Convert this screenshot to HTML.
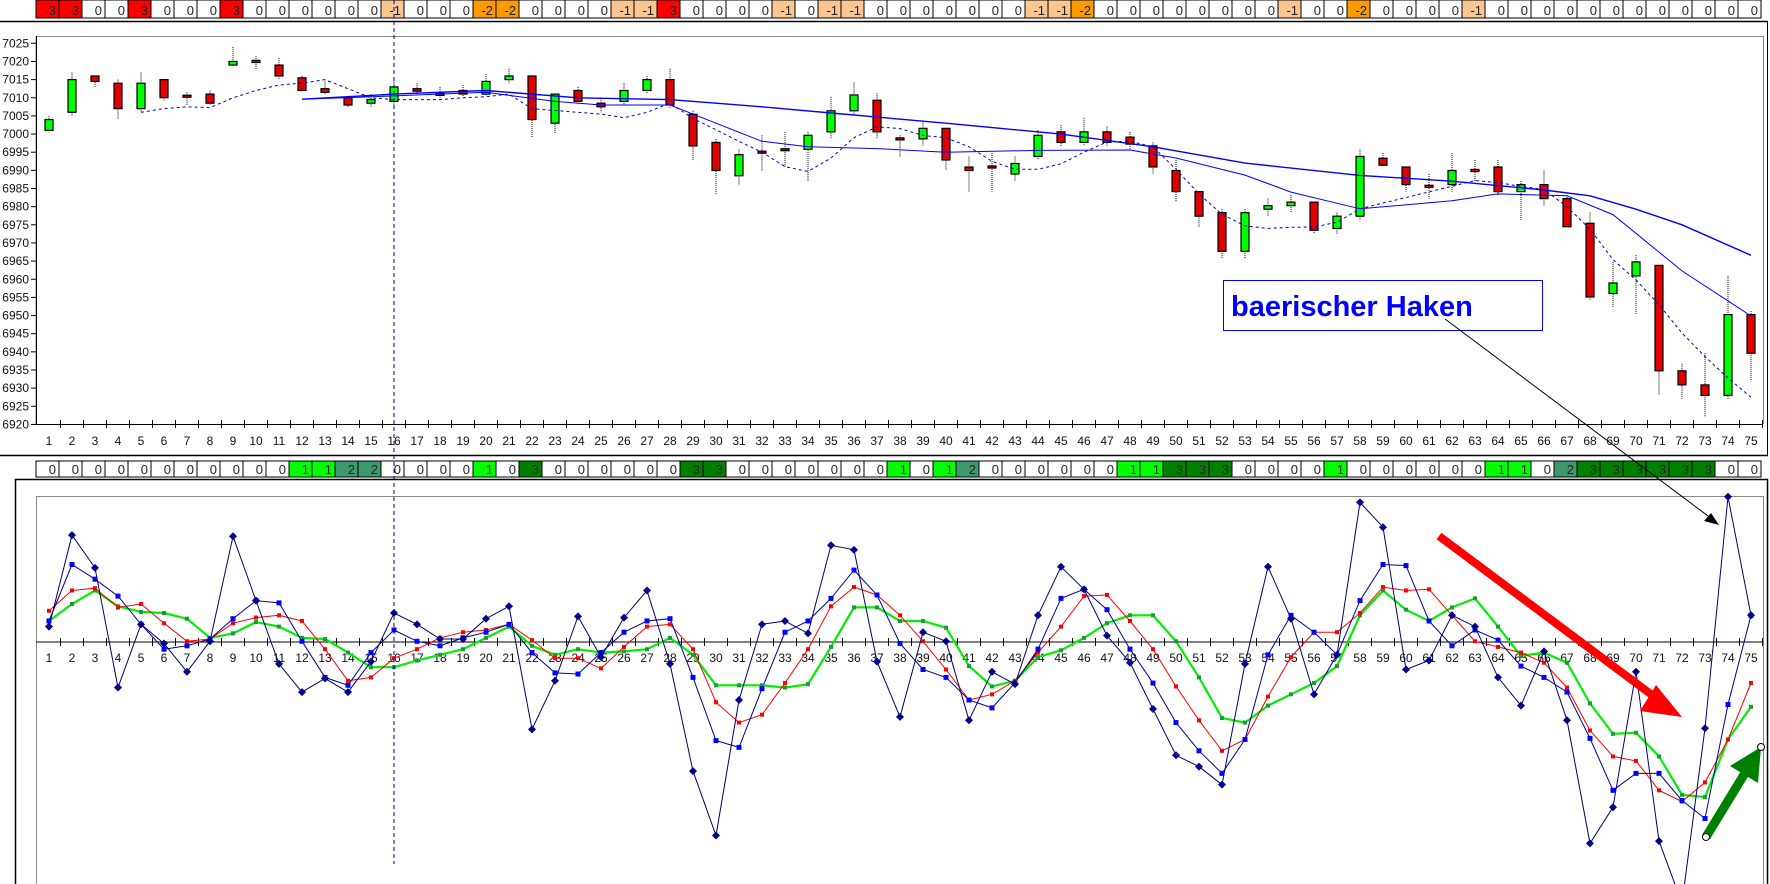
<!DOCTYPE html>
<html><head><meta charset="utf-8">
<style>
html,body{margin:0;padding:0;background:#fff;width:1770px;height:884px;overflow:hidden}
svg{display:block;font-family:"Liberation Sans",Arial,sans-serif}
</style></head>
<body>
<svg id="s" width="1770" height="884" viewBox="0 0 1770 884" xmlns="http://www.w3.org/2000/svg"></svg>
<script>
(function(){
var S=document.getElementById('s');var out=[];
function X(i){return 49+(i-1)*23;}
function YU(v){return 43.3+(7025-v)*3.63;}
var topv=[-3,-3,0,0,-3,0,0,0,-3,0,0,0,0,0,0,-1,0,0,0,-2,-2,0,0,0,0,-1,-1,-3,0,0,0,0,-1,0,-1,-1,0,0,0,0,0,0,0,-1,-1,-2,0,0,0,0,0,0,0,0,-1,0,0,-2,0,0,0,0,-1,0,0,0,0,0,0,0,0,0,0,0,0];
var bot=[0,0,0,0,0,0,0,0,0,0,0,1,1,2,2,0,0,0,0,1,0,3,0,0,0,0,0,0,3,3,0,0,0,0,0,0,0,1,0,1,2,0,0,0,0,0,0,1,1,3,3,3,0,0,0,0,1,0,0,0,0,0,0,1,1,0,2,3,3,3,3,3,3,0,0];
var tc={"-3":"#ff0000","-2":"#ff9900","-1":"#fcc690","0":"#ffffff"};
var bc={"1":"#00ff00","2":"#3c9a6e","3":"#008000","0":"#ffffff"};
function row(arr,y,h,cols){for(var k=0;k<75;k++){var x=36+23*k;var v=arr[k];
out.push('<rect x="'+x+'" y="'+y+'" width="23" height="'+h+'" fill="'+cols[String(v)]+'" stroke="#000" stroke-width="1"/>');
out.push('<text x="'+(x+20)+'" y="'+(y+h-3)+'" font-size="13" text-anchor="end" fill="#222">'+v+'</text>');}}
row(topv,0,18,tc);
out.push('<line x1="0" y1="21.5" x2="1768" y2="21.5" stroke="#000" stroke-width="1.5"/>');
out.push('<line x1="1767.5" y1="21" x2="1767.5" y2="455" stroke="#000"/>');
out.push('<polyline points="36,424 36,36.5 1763.5,36.5 1763.5,424" fill="none" stroke="#888"/>');
out.push('<line x1="0" y1="455.5" x2="1768" y2="455.5" stroke="#000" stroke-width="1.5"/>');
out.push('<line x1="36.5" y1="36" x2="36.5" y2="425" stroke="#000"/>');
for(var v=6920;v<=7025;v+=5){var y=YU(v);out.push('<line x1="31" y1="'+y+'" x2="36" y2="'+y+'" stroke="#000"/>');
out.push('<text x="29" y="'+(y+4)+'" font-size="12" text-anchor="end" fill="#111">'+v+'</text>');}
out.push('<line x1="36" y1="424.5" x2="1763" y2="424.5" stroke="#000"/>');
for(var i=1;i<=75;i++){var tx=X(i)+11.5;out.push('<line x1="'+tx+'" y1="420" x2="'+tx+'" y2="428" stroke="#000"/>');
out.push('<text x="'+X(i)+'" y="445" font-size="12" text-anchor="middle" fill="#111">'+i+'</text>');}
var C=[[7001,7004,7005,7000.5],[7006,7015,7017,7005],[7016,7014.5,7016,7013],[7014,7007,7015,7004],[7007,7014,7017,7006],[7015,7010,7015,7009],[7010.7,7010.3,7011.5,7008],[7011,7008.5,7012,7008],[7019,7020,7024,7019],[7020.3,7019.7,7021.5,7018],[7019,7016,7021,7015],[7015.5,7012,7016,7012],[7012.5,7011.5,7014.5,7011],[7010,7008,7010,7007.5],[7008.5,7009.5,7011,7007.5],[7009,7013,7015,7008],[7012.5,7011.8,7014,7011],[7011.2,7010.8,7013,7010],[7012,7011,7013.5,7010.5],[7011,7014.5,7016.5,7010.5],[7015,7016,7018,7014],[7016,7004,7016,6999],[7003,7011,7011,7000],[7012,7009,7013,7008],[7008.5,7007.5,7010,7006],[7009,7012,7014,7008],[7012,7015,7016,7011],[7015,7008,7018,7007],
[7008,6999,7009,6995],[7000,6992,7001,6985],[6990.5,6996.5,6998,6988],[6997.5,6997,7002,6992],[6998.2,6997.8,7003,6993],[6998,7002,7003,6989],[7003,7009,7013,7001],[7009,7013.5,7017,7008],[7012,7003,7014,7001],[7001.3,7000.7,7002,6996],[7001,7004,7006,6999],[7004,6995,7004,6992],[6993,6992,6996,6986],[6993.3,6992.7,6997,6986],[6991,6994,6996,6989],[6996,7002,7003.5,6995],[7003,7000,7005,6999],[7000,7003,7007,6999],[7003,7000,7004.5,6999],[7001.5,6999.5,7003,6998],[6999,6993,7000,6991],[6992,6986,6995,6983],[6986,6979,6986,6976],[6980,6969,6981,6967],[6969,6980,6981,6967],[6981,6982,6984,6979],[6982,6983,6985,6980],[6983,6975,6983,6974],[6975.5,6979,6980,6974],[6979,6996,6998,6978],[6995.5,6993.5,6997,6993],[6993,6988,6993,6986],[6987.8,6987.2,6991,6984],[6988,6992,6997,6986],[6992.3,6991.7,6995,6989],[6993,6986,6995,6985],[6986,6988,6989,6978],[6988,6984,6992,6982],[6984,6976,6985,6976],[6977,6956,6980,6955],[6957,6960,6966,6953],[6962,6966,6968,6951],[6965,6935,6965,6928],[6935,6931,6937,6927],[6931,6928,6940,6922],[6928,6951,6962,6927],[6951,6940,6952,6932]];
function cor(v){return v-2.3*(v-6928)/72;}
for(var i=0;i<75;i++){var c=C[i].slice();if(i>=28){c=c.map(cor);}
var x=X(i+1);var o=c[0],cl=c[1],h=c[2],l=c[3];
out.push('<line x1="'+x+'" y1="'+YU(h)+'" x2="'+x+'" y2="'+YU(l)+'" stroke="#000" stroke-dasharray="1,1"/>');
var yt=YU(Math.max(o,cl)),yb=YU(Math.min(o,cl));var hh=Math.max(yb-yt,2);
out.push('<rect x="'+(x-4)+'" y="'+yt+'" width="8" height="'+hh+'" fill="'+(cl>=o?'#00ff00':'#e00000')+'" stroke="#000" stroke-width="1.2"/>');}
function pl(a,st){var p=a.map(function(q){return X(q[0])+','+YU(q[1]).toFixed(1)}).join(' ');out.push('<polyline points="'+p+'" fill="none" '+st+'/>');}
pl([[12,7009.6],[16,7011],[20,7012],[24,7010],[28,7009.5],[32,7007.5],[35,7005.8],[40,7003],[45,7000],[49,6996.5],[53,6992],[58,6988.6],[62,6987],[66,6984.6],[68,6983],[70,6979.3],[72,6975],[75,6966.6]],'stroke="#0000ff" stroke-width="1.4"');
pl([[12,7009.6],[16,7010.5],[20,7011.5],[23,7009],[25,7008],[28,7008],[30,7003],[32,6998],[34,6996.5],[37,6996],[40,6995],[44,6995.5],[48,6995.6],[50,6993.4],[53,6988.7],[55,6984],[58,6979.4],[62,6981.6],[64,6983.5],[67,6983],[69,6977.8],[72,6962.3],[75,6949.9]],'stroke="#0000ff" stroke-width="1"');
pl([[5,7006],[6,7007],[7,7007.5],[8,7007.3],[9,7010],[10,7012],[11,7013.5],[12,7014],[13,7015],[14,7012.5],[15,7010],[16,7009.5],[17,7009.5],[18,7009.5],[19,7010],[20,7010.3],[21,7011],[22,7007],[23,7006.5],[24,7006],[25,7005.5],[26,7004.5],[27,7006],[28,7008.5],[29,7004.3],[30,7001.2],[31,6998],[32,6995],[33,6991],[34,6989.7],[35,6993.4],[36,6999],[37,7002],[38,7001.5],[39,6999.6],[40,6999],[41,6996.5],[42,6992.5],[43,6990.3],[44,6990.3],[45,6991.8],[46,6995],[47,6997.8],[48,6998],[49,6996.5],[50,6990.3],[51,6983.5],[52,6977.9],[53,6974.7],[54,6974],[55,6974.3],[56,6974.4],[57,6975.7],[58,6979.4],[59,6981],[60,6982.5],[61,6984.1],[62,6985.6],[63,6987.2],[64,6986.6],[65,6985.6],[66,6984.7],[67,6980],[68,6973.8],[69,6965.4],[70,6959.8],[71,6953],[72,6945.2],[73,6938.7],[74,6932.8],[75,6927.5]],'stroke="#0000cc" stroke-width="1" stroke-dasharray="3,3"');
out.push('<rect x="1223.5" y="280.5" width="319" height="50" fill="#fff" stroke="#0000ff"/>');
out.push('<text x="1231" y="316" font-size="29" font-weight="bold" fill="#0000ff">baerischer Haken</text>');
row(bot,461,16,bc);
out.push('<polyline points="15.5,884 15.5,479.5 1767.5,479.5 1767.5,884" fill="none" stroke="#000" stroke-width="1.5"/>');
out.push('<polyline points="36.5,884 36.5,496.5 1763.5,496.5 1763.5,884" fill="none" stroke="#888"/>');
out.push('<line x1="36" y1="642" x2="1763" y2="642" stroke="#000"/>');
for(var i=1;i<=75;i++){var tx=X(i)+11.5;out.push('<line x1="'+tx+'" y1="638" x2="'+tx+'" y2="646" stroke="#000"/>');
out.push('<text x="'+X(i)+'" y="662" font-size="12" text-anchor="middle" fill="#111">'+i+'</text>');}
function YL(p){return p*1.129;}
var D=[555,474,503,609,553,570,595,568,475,532,588,613,601,613,586,543,553,566,566,548,537,646,603,546,582,547,523,588,683,740,620,553,550,561,483,487,586,635,560,568,638,595,606,545,502,522,563,587,628,669,679,695,588,502,548,615,580,445,467,593,585,545,555,600,625,577,638,747,715,595,745,800,645,440,545];
var B=[550,500,513,528,553,575,572,566,548,532,534,568,600,607,578,558,568,572,565,560,553,578,596,597,578,560,550,548,600,656,662,610,560,550,530,505,527,570,593,600,620,627,605,575,530,522,540,575,605,640,665,685,655,580,545,560,580,532,500,501,550,572,558,567,590,600,613,654,700,685,685,709,725,624,545];
var R=[541,523,521,538,535,552,568,566,552,547,545,550,575,603,600,583,575,565,560,558,553,567,583,583,592,573,555,553,575,622,640,633,605,575,537,520,527,545,568,593,620,615,603,578,555,528,527,550,575,608,638,665,655,617,582,560,560,543,520,523,522,545,568,573,578,587,609,647,670,674,700,710,693,655,605];
var G=[550,535,523,537,542,543,548,565,561,551,555,565,566,578,591,591,585,580,575,565,555,572,580,575,578,577,575,565,580,607,607,607,609,606,573,538,538,550,550,556,590,608,603,582,576,565,552,545,545,568,600,636,640,625,615,605,590,545,523,540,550,538,530,555,581,578,587,623,650,649,670,704,706,655,626];
function series(a,col,w){var p=a.map(function(y,k){return X(k+1)+','+YL(y).toFixed(1)}).join(' ');out.push('<polyline points="'+p+'" fill="none" stroke="'+col+'" stroke-width="'+w+'"/>');}
series(G,'#00ee00',2.2);series(R,'#ff0000',1);series(B,'#000090',1);series(D,'#000070',1);
G.forEach(function(y,k){out.push('<rect x="'+(X(k+1)-2)+'" y="'+(YL(y)-2)+'" width="4" height="4" fill="#1a9a3a"/>');});
R.forEach(function(y,k){out.push('<rect x="'+(X(k+1)-2)+'" y="'+(YL(y)-2)+'" width="4" height="4" fill="#ff0000"/>');});
B.forEach(function(y,k){out.push('<rect x="'+(X(k+1)-2.5)+'" y="'+(YL(y)-2.5)+'" width="5" height="5" fill="#0000ff"/>');});
D.forEach(function(y,k){var x=X(k+1),yy=YL(y);out.push('<polygon points="'+x+','+(yy-4)+' '+(x+4)+','+yy+' '+x+','+(yy+4)+' '+(x-4)+','+yy+'" fill="#00008b"/>');});
out.push('<line x1="394" y1="0" x2="394" y2="864" stroke="#0000aa" stroke-dasharray="4,3"/>');
out.push('<line x1="1445" y1="319" x2="1712" y2="519" stroke="#000" stroke-width="1"/>');
out.push('<polygon points="1719,525 1704,521 1711,513" fill="#000"/>');
out.push('<line x1="1439" y1="536" x2="1660" y2="701" stroke="#ff0000" stroke-width="8"/>');
out.push('<polygon points="1682,717 1656,685 1640,711" fill="#ff0000"/>');
out.push('<line x1="1706" y1="837" x2="1745" y2="773" stroke="#008000" stroke-width="9"/>');
out.push('<polygon points="1761,747 1730,766 1758,783" fill="#008000"/>');
out.push('<circle cx="1706" cy="837" r="3.5" fill="#fff" stroke="#000"/>');
out.push('<circle cx="1761" cy="747" r="3.5" fill="#fff" stroke="#000"/>');
S.innerHTML=out.join('');
})();
</script>
</body></html>
